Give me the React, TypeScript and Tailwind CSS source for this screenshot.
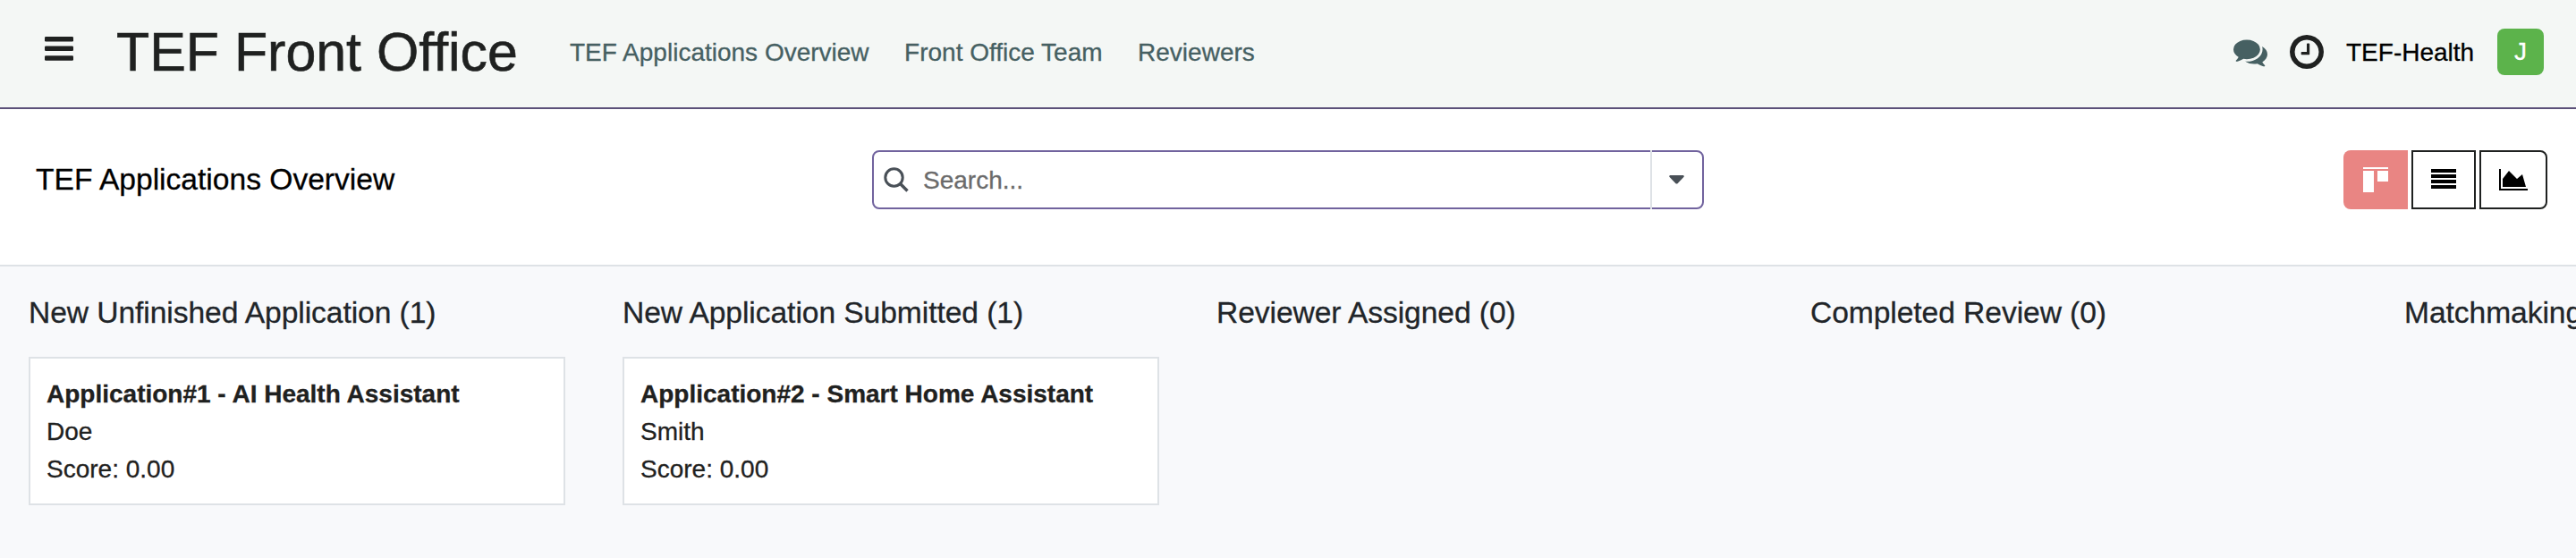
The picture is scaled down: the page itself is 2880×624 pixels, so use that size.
import React from "react";

type Application = { title: string; name: string; score: string };
type Stage = { name: string; count: number; cards: Application[] };

const stages: Stage[] = [
  {
    name: "New Unfinished Application",
    count: 1,
    cards: [{ title: "Application#1 - AI Health Assistant", name: "Doe", score: "0.00" }],
  },
  {
    name: "New Application Submitted",
    count: 1,
    cards: [{ title: "Application#2 - Smart Home Assistant", name: "Smith", score: "0.00" }],
  },
  { name: "Reviewer Assigned", count: 0, cards: [] },
  { name: "Completed Review", count: 0, cards: [] },
  { name: "Matchmaking", count: 0, cards: [] },
];

function BarsIcon() {
  return (
    <svg className="h-[27px] w-8" viewBox="0 0 32 27" fill="currentColor">
      <rect y="0" width="32" height="5.4" rx="1.2" />
      <rect y="10.6" width="32" height="5.4" rx="1.2" />
      <rect y="21.3" width="32" height="5.4" rx="1.2" />
    </svg>
  );
}

function CommentsIcon() {
  return (
    <svg className="h-[38px] w-[38px]" viewBox="0 0 1792 1792" fill="currentColor">
      <path d="M1408 768q0 139-94 257t-256.5 186.5-353.5 68.5q-86 0-176-16-124 88-278 128-36 9-86 16h-3q-11 0-20.5-8t-11.5-21q-1-3-1-6.5t.5-6.5 2-6l2.5-5 3.5-5.5 4-5 4.5-5 4-4.5q5-6 23-25t26-29.5 22.5-29 25-38.5 20.5-44q-124-72-195-177t-71-224q0-139 94-257t256.5-186.5 353.5-68.5 353.5 68.5 256.5 186.5 94 257zm384 256q0 120-71 224.5t-195 176.5q10 24 20.5 44t25 38.5 22.5 29 26 29.5 23 25q1 1 4 4.5t4.5 5 4 5 3.5 5.5l2.5 5t2 6 .5 6.5-1 6.5q-3 14-13 22t-22 7q-50-7-86-16-154-40-278-128-90 16-176 16-271 0-472-132 58 4 88 4 161 0 309-45t264-129q125-92 192-212t67-254q0-77-23-152 129 71 204 178t75 230z" />
    </svg>
  );
}

function ClockIcon() {
  return (
    <svg className="h-[38px] w-[38px]" viewBox="128 128 1536 1536" fill="currentColor">
      <path d="M1024 544v448q0 14-9 23t-23 9h-320q-14 0-23-9t-9-23v-64q0-14 9-23t23-9h224v-352q0-14 9-23t23-9h64q14 0 23 9t9 23zm416 352q0-148-73-273t-198-198-273-73-273 73-198 198-73 273 73 273 198 198 273 73 273-73 198-198 73-273zm224 0q0 209-103 385.5t-279.5 279.5-385.5 103-385.5-103-279.5-279.5-103-385.5 103-385.5 279.5-279.5 385.5-103 385.5 103 279.5 279.5 103 385.5z" />
    </svg>
  );
}

function SearchIcon() {
  return (
    <svg className="h-7 w-7" viewBox="0 0 28 28" fill="none" stroke="currentColor" strokeWidth="3">
      <circle cx="11.5" cy="11.5" r="9.7" />
      <path d="M18.3 18.3 L26.5 26.5" strokeWidth="3.4" />
    </svg>
  );
}

function KanbanIcon() {
  return (
    <svg className="h-7 w-7" viewBox="0 0 28 28" fill="currentColor">
      <path d="M0 0h28v2H0zM0 4h12v24H0zM16 4h12v12H16z" />
    </svg>
  );
}

function ListIcon() {
  return (
    <svg className="h-[22px] w-7" viewBox="0 0 28 22" fill="currentColor">
      <path d="M0 0h28v4H0zM0 6h28v4H0zM0 12h28v4H0zM0 18h28v4H0z" />
    </svg>
  );
}

function AreaChartIcon() {
  return (
    <svg className="h-6 w-8" viewBox="0 0 32 24" fill="currentColor">
      <path d="M0 0h2v22h30v2H0z" />
      <path d="M4 20V11L11 2L20 11L26 6L30 20z" />
    </svg>
  );
}

function Card({ app }: { app: Application }) {
  return (
    <article className="h-[166px] w-[600px] border-2 border-[#dee2e6] bg-white px-[18px] pt-[19px] text-[28px] leading-[42px] text-[#1f2120]">
      <div className="font-bold">{app.title}</div>
      <div>{app.name}</div>
      <div>{`Score: ${app.score}`}</div>
    </article>
  );
}

export default function App() {
  return (
    <div className="flex h-[624px] w-full flex-col overflow-hidden whitespace-nowrap bg-[#f8f9fb] font-['Liberation_Sans',Arial,sans-serif] text-[28px] [-webkit-text-stroke:0.3px]">
      <header className="flex h-[122px] shrink-0 items-center border-b-2 border-[#5b5079] bg-[#f4f7f5] pr-9 pb-1 pl-[50px]">
        <button className="mb-2 text-[#1f2120]">
          <BarsIcon />
        </button>
        <h1 className="ml-[48px] w-[507px] text-[60.9px] leading-[72px] text-[#1f2120] [-webkit-text-stroke:0.6px]">TEF Front Office</h1>
        <nav className="flex items-center gap-[39.5px] pt-0.5 leading-[42px] text-[#466062]">
          <a>TEF Applications Overview</a>
          <a>Front Office Team</a>
          <a>Reviewers</a>
        </nav>
        <div className="ml-auto flex items-center">
          <span className="text-[#466062]">
            <CommentsIcon />
          </span>
          <span className="ml-[25px] text-[#1f2120]">
            <ClockIcon />
          </span>
          <span className="ml-[25px] w-[169px] pt-0.5 leading-[42px] text-black">TEF-Health</span>
          <span className="flex h-[52px] w-[52px] items-center justify-center rounded-lg bg-[#5cb34b] text-white">J</span>
        </div>
      </header>

      <section className="grid h-[176px] shrink-0 grid-cols-[1fr_930px_1fr] items-start border-b-2 border-[#dee2e6] bg-white pt-[46px] pr-8 pl-10">
        <div className="text-[33.6px] leading-[66px] text-black">TEF Applications Overview</div>
        <div className="-ml-1 flex h-[66px] w-[930px] items-stretch rounded-lg border-2 border-[#71639e]">
          <div className="flex grow items-center pl-[11px]">
            <span className="text-[#495057]">
              <SearchIcon />
            </span>
            <span className="ml-4 pt-0.5 leading-[42px] text-[#6b6b6b]">Search...</span>
          </div>
          <div className="-my-0.5 flex w-[58px] items-center border-l-2 border-[#dee2e6] pl-[19px] text-[#495057]">
            <svg className="h-2.5 w-[17px]" viewBox="0 0 17 10" fill="currentColor">
              <path d="M1.2 0H15.8Q17.5 .6 16.4 2L9.5 9.2Q8.5 10 7.5 9.2L.6 2Q-.5 .6 1.2 0z" />
            </svg>
          </div>
        </div>
        <div className="flex h-[66px] justify-end gap-1">
          <button className="flex w-[72px] items-center justify-center rounded-l-lg bg-[#e98583] text-white">
            <KanbanIcon />
          </button>
          <button className="flex w-[72px] items-center justify-center border-2 border-[#1f2120] pb-0.5 text-black">
            <ListIcon />
          </button>
          <button className="flex w-[76px] items-center justify-center rounded-r-lg border-2 border-[#1f2120] text-black">
            <AreaChartIcon />
          </button>
        </div>
      </section>

      <main className="flex grow gap-16 pt-7 pl-8">
        {stages.map((stage) => (
          <section key={stage.name} className="w-[600px] shrink-0">
            <h2 className="mb-[25px] text-[33.6px] leading-[48px] tracking-[-0.06px] text-[#212529]">
              {`${stage.name} (${stage.count})`}
            </h2>
            {stage.cards.map((app) => (
              <Card key={app.title} app={app} />
            ))}
          </section>
        ))}
      </main>
    </div>
  );
}
